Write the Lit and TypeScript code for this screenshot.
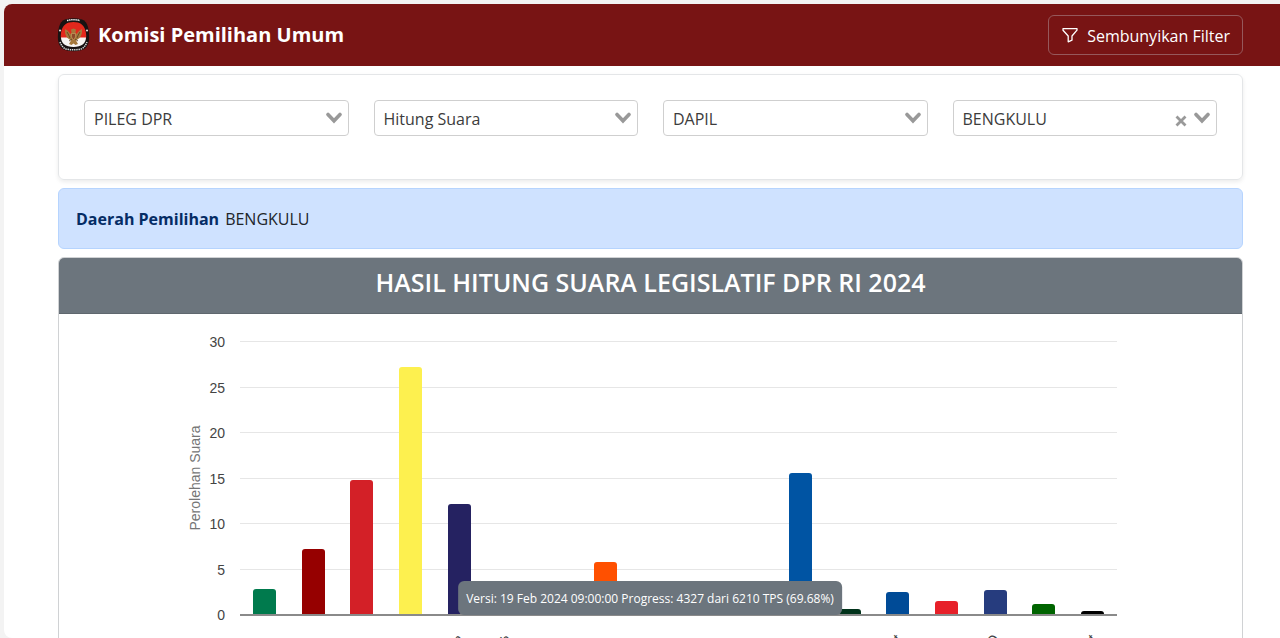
import { LitElement, html, svg, css, nothing } from "lit";
import { customElement, property } from "lit/decorators.js";

interface Party {
  label: string;
  share: number;
  color: string;
}

const PARTIES: Party[] = [
  { label: "Partai Kebangkitan...", share: 2.9, color: "#007a4d" },
  { label: "Partai Gerakan Ind...", share: 7.3, color: "#960000" },
  { label: "Partai Demokrasi I...", share: 14.8, color: "#d32027" },
  { label: "Partai Golongan K...", share: 27.3, color: "#fdf04f" },
  { label: "Partai NasDem", share: 12.2, color: "#252261" },
  { label: "Partai Buruh", share: 1.1, color: "#f26522" },
  { label: "Partai Gelombang...", share: 0.9, color: "#0ba1e2" },
  { label: "Partai Keadilan Se...", share: 5.8, color: "#ff5000" },
  { label: "Partai Kebangkitan...", share: 0.6, color: "#d90000" },
  { label: "Partai Hati Nurani...", share: 1.7, color: "#e8821e" },
  { label: "Partai Garda Repu...", share: 0.4, color: "#a32a2a" },
  { label: "Partai Amanat Na...", share: 15.6, color: "#0054a3" },
  { label: "Partai Bulan Bintan...", share: 0.7, color: "#00321a" },
  { label: "Partai Demokrat", share: 2.5, color: "#004b97" },
  { label: "Partai Solidaritas I...", share: 1.55, color: "#e72029" },
  { label: "PARTAI PERINDO", share: 2.7, color: "#263c7e" },
  { label: "Partai Persatuan P...", share: 1.2, color: "#006400" },
  { label: "Partai Ummat", share: 0.4, color: "#000000" },
];

@customElement("filter-select")
class FilterSelect extends LitElement {
  @property() label = "";
  @property() value = "";
  @property({ type: Boolean }) clearable = false;

  static styles = css`
    :host {
      display: block;
    }
    .box {
      display: grid;
      grid-template-columns: 1fr auto auto;
      align-items: center;
      height: 36px;
      box-sizing: border-box;
      border: 1px solid #cfcfcf;
      border-radius: 4px;
      background: #fff;
      padding-right: 6px;
    }
    select {
      grid-area: 1 / 1 / 2 / 4;
      min-width: 0;
      width: 100%;
      height: 34px;
      appearance: none;
      border: 0;
      margin: 0;
      background: transparent;
      padding: 2px 48px 0 9px;
      font: 16px/24px "Open Sans", "Noto Sans", sans-serif;
      color: #3c3c3c;
    }
    .clear {
      grid-area: 1 / 2;
      display: flex;
      border: 0;
      background: none;
      padding: 6px 7px 0 0;
    }
    .arrow {
      grid-area: 1 / 3;
      pointer-events: none;
    }
  `;

  render() {
    return html`<div class="box">
      <select aria-label=${this.label}>
        <option>${this.value}</option>
      </select>
      ${this.clearable
        ? html`<button class="clear" aria-label="Hapus pilihan">
            <svg width="12" height="12" viewBox="0 0 12 12" fill="none" stroke="#999" stroke-width="2.8">
              <path d="M1.5 1.5 10.5 10.5M10.5 1.5 1.5 10.5" />
            </svg>
          </button>`
        : nothing}
      <svg class="arrow" width="16" height="12" viewBox="0 0 16 12" fill="none" stroke="#999" stroke-width="3.6">
        <path d="M2 2.5 8 8.8 14 2.5" stroke-linecap="round" />
      </svg>
    </div>`;
  }
}

@customElement("vote-chart")
class VoteChart extends LitElement {
  static styles = css`
    :host {
      display: block;
    }
    .plot {
      display: block;
      width: 100%;
      height: auto;
    }
    .tick {
      font: 14px "Liberation Sans", Arial, sans-serif;
      fill: #444;
      text-anchor: end;
    }
    .axis {
      font: 14px "Liberation Sans", Arial, sans-serif;
      fill: #757575;
      text-anchor: middle;
    }
  `;

  render() {
    const left = 181;
    const width = 877;
    const base = 301;
    const unit = 9.1;
    const slot = width / PARTIES.length;
    const bar = 23;
    return html`<svg class="plot" viewBox="0 0 1183 460" role="img" aria-label="Perolehan Suara">
      ${[0, 5, 10, 15, 20, 25, 30].map((v) => {
        const y = Math.round(base - v * unit);
        return svg`<line x1=${left} x2=${left + width} y1=${y - 0.5} y2=${y - 0.5} stroke="#e6e6e6"></line>
          <text class="tick" x="166" y=${y + 5}>${v}</text>`;
      })}
      <text class="axis" transform="translate(141 164) rotate(-90)">Perolehan Suara</text>
      ${PARTIES.map((p, i) => {
        const x = Math.round(left + slot * (i + 0.5) - bar / 2);
        const top = Math.round(base - p.share * unit);
        const r = Math.min(3, base - top);
        return svg`<path fill=${p.color}
            d="M${x} ${base}V${top + r}q0 ${-r} ${r} ${-r}h${bar - 2 * r}q${r} 0 ${r} ${r}V${base}z"></path>
          <text class="tick" transform="translate(${x + 16} 326) rotate(-45)">${p.label}</text>`;
      })}
      <rect x=${left} y=${base - 1} width=${width} height="2" fill="#8a8a8a"></rect>
    </svg>`;
  }
}

@customElement("app-root")
class AppRoot extends LitElement {
  static styles = css`
    :host {
      display: block;
      height: 100vh;
      box-sizing: border-box;
      padding: 4px 0 0 4px;
      overflow: hidden;
      background: #f3f3f3;
      font: 16px/24px "Open Sans", "Noto Sans", sans-serif;
      color: #212529;
    }
    .window {
      height: 100%;
      overflow: hidden;
      border-radius: 8px 0 0 8px;
      background: #fff;
    }
    .topbar {
      display: flex;
      align-items: center;
      justify-content: space-between;
      height: 62px;
      box-sizing: border-box;
      padding: 0 37px 0 53px;
      background: #781414;
      color: #fff;
    }
    .brand {
      display: flex;
      align-items: center;
      gap: 8px;
      color: #fff;
      font-size: 20px;
      font-weight: 700;
      text-decoration: none;
    }
    .toggle {
      display: flex;
      align-items: center;
      gap: 8px;
      height: 40px;
      padding: 2px 12px 0;
      border: 1px solid #96585b;
      border-radius: 6px;
      background: none;
      color: #fff;
      font: inherit;
    }
    main {
      display: flex;
      flex-direction: column;
      gap: 8px;
      padding: 8px 37px 0 54px;
    }
    .filters {
      display: grid;
      grid-template-columns: repeat(4, 1fr);
      gap: 25px;
      padding: 25px 25px 43px;
      border: 1px solid #e4e6e8;
      border-radius: 6px;
      box-shadow: 0 2px 4px rgba(0, 0, 0, 0.08);
    }
    .region {
      display: flex;
      gap: 6px;
      padding: 18px 17px 17px;
      border: 1px solid #b6d4fe;
      border-radius: 6px;
      background: #cfe2ff;
    }
    .region strong {
      color: #052c65;
    }
    .card {
      border: 1px solid #d0d2d4;
      border-radius: 6px 6px 0 0;
      overflow: hidden;
    }
    h1 {
      margin: 0;
      padding: 9px 16px 16px;
      border-bottom: 1px solid #5f676e;
      background: #6c757d;
      color: #fff;
      font-size: 25px;
      line-height: 30px;
      font-weight: 600;
      text-align: center;
    }
    .status {
      position: fixed;
      left: 50%;
      bottom: 23px;
      transform: translateX(calc(-50% + 10px));
      padding: 9px 8px 7px;
      border-radius: 6px;
      background: #6c757d;
      color: #fff;
      font-size: 12px;
      line-height: 18px;
      white-space: nowrap;
    }
  `;

  render() {
    return html`<div class="window">
      <header class="topbar">
        <a class="brand" href="#">
          <svg width="33" height="34" viewBox="0 1 33 34" aria-hidden="true">
            <path d="M8 2.500Q16.500 0 25 2.500q4.500 1.500 6 7.500 1.500 6 1 13-1 8-7 10-8.500 2.500-17 0Q2 31 1 23 .5 16 2 10 3.500 4 8 2.500z" fill="#171212" />
            <path d="M4 21.500a12.500 14 0 0 1 0-5.500C5 8 10 5 16.500 5S28 8 29 16a12.500 14 0 0 1 0 5.500z" fill="#e3281c" />
            <path d="M4 20.500h25c-.3 6-4.500 9.500-12.500 9.500S4.300 26.500 4 20.500z" fill="#f7f4f2" />
            <path d="M10 3.500q6.500-1.500 13 0" fill="none" stroke="#eee" stroke-width="1.500" stroke-dasharray="1.500 .6" />
            <path d="M3 25q2 5.500 6 7 7.500 1.700 15 0 4-1.500 6-7" fill="none" stroke="#ddd" stroke-width="1.500" stroke-dasharray="1.400 .8" />
            <circle cx="3" cy="13.500" r="1" fill="#eee" />
            <circle cx="30" cy="13.500" r="1" fill="#eee" />
            <path d="M8 12q3 1 5.500 5l1-1-.5-3.500 2.500-1 2.500 1-.5 3.500 1 1q2.500-4 5.500-5 .5 6-2.500 9l-3.500 2.500 2 3.500-2.500 1-2-1.500-2 1.500-2.500-1 2-3.500L10.500 21Q7.500 18 8 12z" fill="#a5783c" />
            <path d="M10 15q2 3 3 6M23 15q-2 3-3 6M12 24l3-2M21 24l-3-2" stroke="#5b3d20" fill="none" stroke-width=".8" />
            <path d="M14.500 16.500h4v3q0 2-2 3-2-1-2-3z" fill="#8d4a2a" stroke="#d6b070" stroke-width=".5" />
          </svg>
          Komisi Pemilihan Umum
        </a>
        <button class="toggle">
          <svg width="18" height="16" viewBox="0 0 18 16" fill="none" stroke="#fff" stroke-width="1.300" stroke-linejoin="round" aria-hidden="true">
            <path d="M2 .7H16V2.200L11 8V12.200L7.200 13.800V8L2 2.200z" />
          </svg>
          Sembunyikan Filter
        </button>
      </header>
      <main>
        <section class="filters">
          <filter-select label="Jenis pemilihan" value="PILEG DPR"></filter-select>
          <filter-select label="Tampilan" value="Hitung Suara"></filter-select>
          <filter-select label="Wilayah" value="DAPIL"></filter-select>
          <filter-select label="Daerah pemilihan" value="BENGKULU" clearable></filter-select>
        </section>
        <div class="region"><strong>Daerah Pemilihan</strong><span>BENGKULU</span></div>
        <section class="card">
          <h1>HASIL HITUNG SUARA LEGISLATIF DPR RI 2024</h1>
          <vote-chart></vote-chart>
        </section>
      </main>
      <div class="status" role="status">Versi: 19 Feb 2024 09:00:00 Progress: 4327 dari 6210 TPS (69.68%)</div>
    </div>`;
  }
}
